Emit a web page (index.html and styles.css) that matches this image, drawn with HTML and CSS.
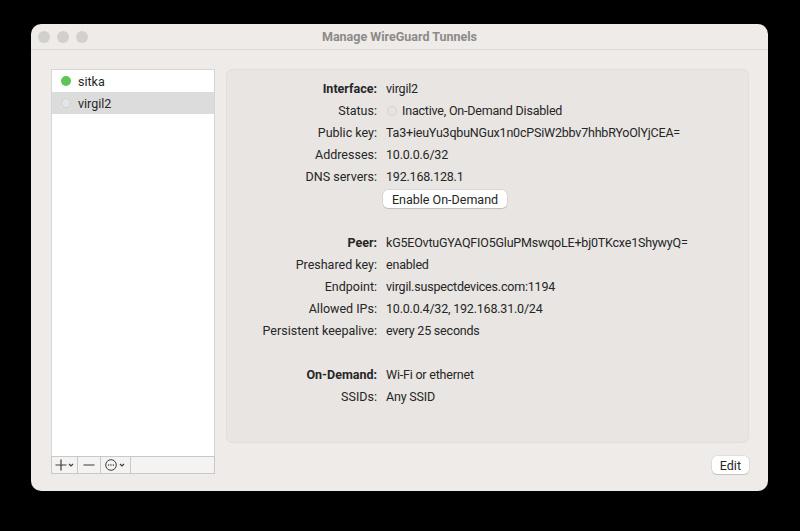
FILE: index.html
```html
<!DOCTYPE html>
<html lang="en">
<head>
  <meta charset="UTF-8" />
  <title>Manage WireGuard Tunnels</title>
  <link rel="stylesheet" href="styles.css">
</head>
<body>

  <div class="window">
    <div class="titlebar">
      <div class="lights">
        <span></span><span></span><span></span>
      </div>
      <div class="title">Manage WireGuard Tunnels</div>
    </div>

    <div class="content">
      <!-- Tunnel list -->
      <div class="sidebar">
        <div class="tunnel-list">
          <div class="tunnel">
            <span class="dot dot-on"></span>sitka
          </div>
          <div class="tunnel selected">
            <span class="dot dot-off"></span>virgil2
          </div>
        </div>
        <div class="list-tools">
          <div class="tool tool-add">
            <svg width="20" height="12" viewBox="0 0 20 12">
              <path d="M6 0.5v11M0.5 6h11" stroke="#3c3c3c" stroke-width="1.2" fill="none"/>
              <path d="M14 5l2 2 2-2" stroke="#3c3c3c" stroke-width="1.2" fill="none"/>
            </svg>
          </div>
          <div class="tool tool-remove">
            <svg width="12" height="12" viewBox="0 0 12 12">
              <path d="M0.5 6h11" stroke="#3c3c3c" stroke-width="1.2" fill="none"/>
            </svg>
          </div>
          <div class="tool tool-more">
            <svg width="22" height="12" viewBox="0 0 22 12">
              <circle cx="6" cy="6" r="5.3" fill="none" stroke="#3c3c3c" stroke-width="1"/>
              <circle cx="3.6" cy="6" r="0.75" fill="#3c3c3c"/>
              <circle cx="6" cy="6" r="0.75" fill="#3c3c3c"/>
              <circle cx="8.4" cy="6" r="0.75" fill="#3c3c3c"/>
              <path d="M15 5l2 2 2-2" stroke="#3c3c3c" stroke-width="1.2" fill="none"/>
            </svg>
          </div>
          <div class="tool tool-fill"></div>
        </div>
      </div>

      <!-- Details -->
      <div class="main">
        <div class="details">
          <div class="label strong">Interface:</div><div class="value">virgil2</div>
          <div class="label">Status:</div><div class="value"><span class="status-dot"></span>Inactive, On-Demand Disabled</div>
          <div class="label">Public key:</div><div class="value">Ta3+ieuYu3qbuNGux1n0cPSiW2bbv7hhbRYoOlYjCEA=</div>
          <div class="label">Addresses:</div><div class="value">10.0.0.6/32</div>
          <div class="label">DNS servers:</div><div class="value">192.168.128.1</div>
          <div class="label"></div><div class="value"><button class="btn">Enable On-Demand</button></div>
          <div class="spacer"></div>

          <div class="label strong">Peer:</div><div class="value">kG5EOvtuGYAQFIO5GluPMswqoLE+bj0TKcxe1ShywyQ=</div>
          <div class="label">Preshared key:</div><div class="value">enabled</div>
          <div class="label">Endpoint:</div><div class="value">virgil.suspectdevices.com:1194</div>
          <div class="label">Allowed IPs:</div><div class="value">10.0.0.4/32, 192.168.31.0/24</div>
          <div class="label">Persistent keepalive:</div><div class="value">every 25 seconds</div>
          <div class="spacer"></div>

          <div class="label strong">On-Demand:</div><div class="value">Wi-Fi or ethernet</div>
          <div class="label">SSIDs:</div><div class="value">Any SSID</div>
        </div>
        <div class="actions">
          <button class="btn">Edit</button>
        </div>
      </div>
    </div>
  </div>

</body>
</html>
```

FILE: styles.css
```css
body {
  margin: 0;
  background: #000;
  font-family: Roboto, "Noto Sans", sans-serif;
  font-size: 12.5px;
  color: #262626;
}

.window {
  margin: 24px 0 0 31px;
  width: 737px;
  height: 467px;
  background: #eeebe8;
  border-radius: 10px;
  overflow: hidden;
  display: flex;
  flex-direction: column;
}

.titlebar {
  height: 25px;
  border-bottom: 1px solid #dcd9d6;
  display: flex;
  align-items: center;
  position: relative;
}

.lights {
  display: flex;
  gap: 7px;
  padding-left: 7px;
}

.lights span {
  width: 12px;
  height: 12px;
  border-radius: 50%;
  background: #d2d0ce;
}

.title {
  position: absolute;
  left: 0;
  right: 0;
  text-align: center;
  font-weight: 700;
  color: #8c8a88;
  font-size: 12.5px;
  pointer-events: none;
}

.content {
  flex: 1;
  display: flex;
  gap: 11px;
  padding: 19px 19px 17px 20px;
}

.sidebar {
  width: 164px;
  display: flex;
  flex-direction: column;
}

.tunnel-list {
  flex: 1;
  background: #fff;
  border: 1px solid #d6d6d6;
  border-bottom: none;
}

.tunnel {
  height: 22px;
  display: flex;
  align-items: center;
  padding-left: 9px;
}

.tunnel.selected {
  background: #dcdcdc;
}

.dot {
  width: 10px;
  height: 10px;
  border-radius: 50%;
  margin-right: 7px;
  box-sizing: border-box;
}

.dot-on {
  background: #5ec454;
}

.dot-off {
  background: #e4e4e4;
  border: 1px solid #d0d0d0;
}

.list-tools {
  height: 16px;
  display: flex;
  border: 1px solid #c8c8c8;
  background: #f4f3f2;
}

.tool {
  display: flex;
  align-items: center;
  justify-content: center;
  border-right: 1px solid #c8c8c8;
}

.tool-add { width: 25px; }
.tool-remove { width: 22px; }
.tool-more { width: 29px; }
.tool-fill { flex: 1; border-right: none; }

.main {
  flex: 1;
  display: flex;
  flex-direction: column;
}

.details {
  flex: 1;
  background: #e8e5e2;
  border: 1px solid #e1dedb;
  border-radius: 6px;
  display: grid;
  grid-template-columns: 150px 1fr;
  grid-auto-rows: 22px;
  align-content: start;
  column-gap: 9px;
  padding-top: 8px;
}

.label {
  text-align: right;
  line-height: 22px;
}

.label.strong {
  font-weight: 700;
}

.value {
  line-height: 22px;
  display: flex;
  align-items: center;
  white-space: nowrap;
  letter-spacing: -0.2px;
}

.spacer {
  grid-column: 1 / 3;
  height: 24px;
}

.status-dot {
  width: 10px;
  height: 10px;
  box-sizing: border-box;
  border-radius: 50%;
  border: 1px solid #d6d3d0;
  background: #e6e3e0;
  margin-right: 5px;
  margin-left: 1px;
}

.btn {
  font-family: inherit;
  font-size: 12.5px;
  color: #262626;
  background: #fff;
  border: none;
  border-radius: 5px;
  height: 18px;
  padding: 0 9px;
  box-shadow: 0 0 0 0.5px rgba(0,0,0,0.12), 0 1px 1px rgba(0,0,0,0.12);
  margin-left: -3px;
}

.actions {
  display: flex;
  justify-content: flex-end;
  padding-top: 13px;
}

.actions .btn {
  margin-left: 0;
  padding: 0 8px;
}
```
